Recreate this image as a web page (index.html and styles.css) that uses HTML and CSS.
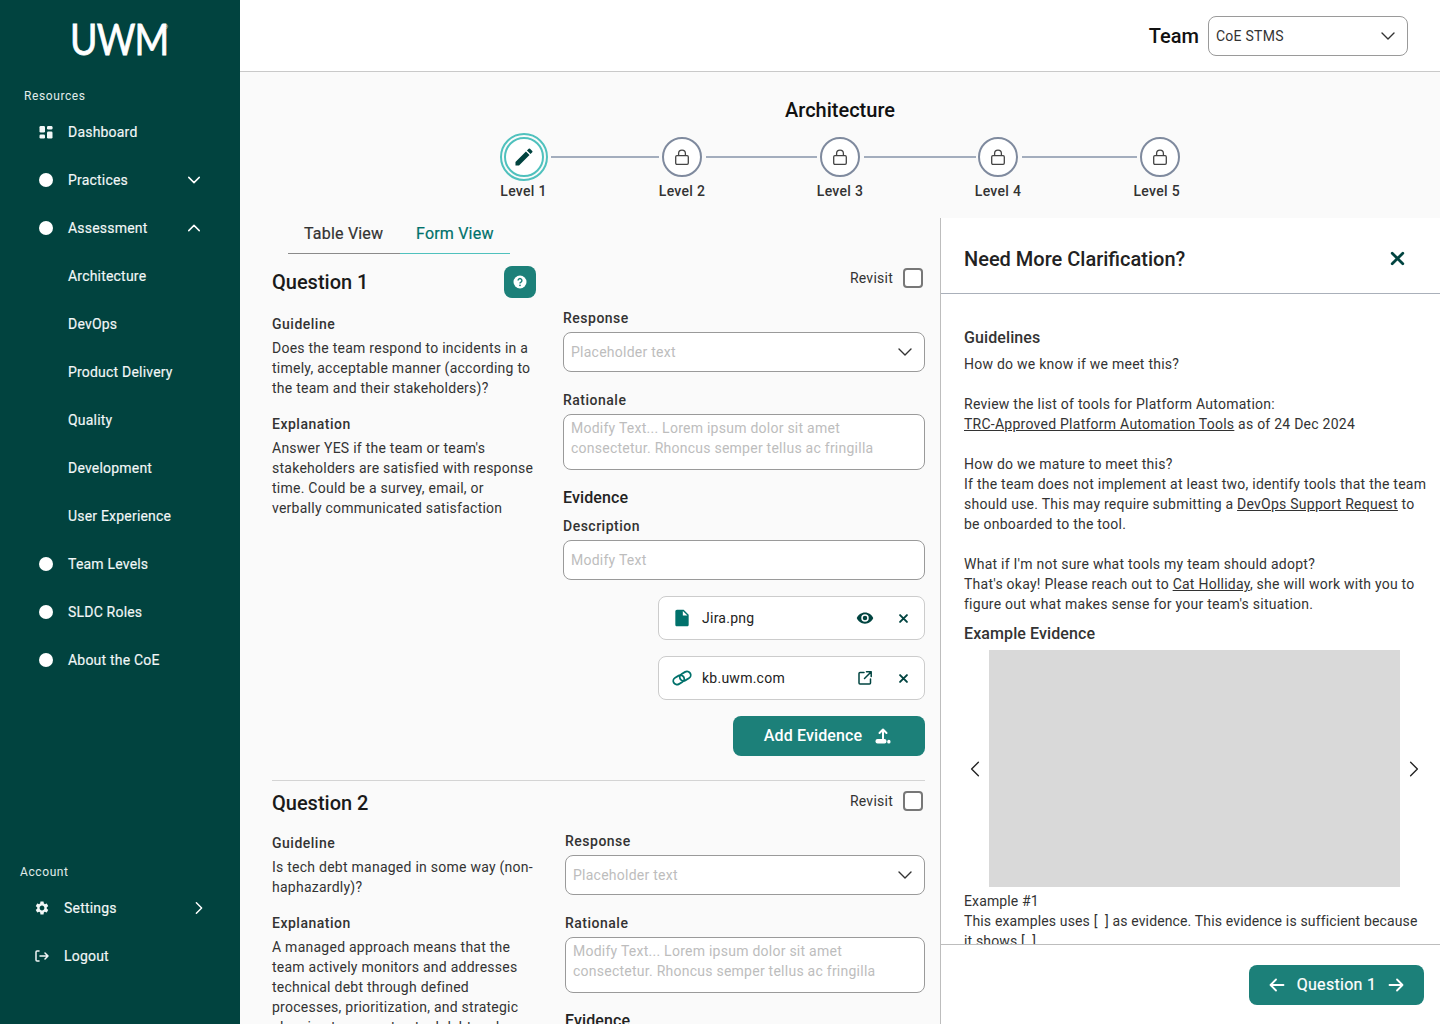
FILE: index.html
```html
<!DOCTYPE html>
<html lang="en">
<head>
<meta charset="utf-8">
<title>UWM Assessment</title>
<link rel="stylesheet" href="styles.css">
</head>
<body>
<svg class="defs" width="0" height="0" aria-hidden="true">
  <symbol id="i-down" viewBox="0 0 16 16"><path d="M2 5l6 6 6-6" fill="none" stroke="currentColor" stroke-linecap="round" stroke-linejoin="round"/></symbol>
  <symbol id="i-up" viewBox="0 0 16 16"><path d="M2 11l6-6 6 6" fill="none" stroke="currentColor" stroke-linecap="round" stroke-linejoin="round"/></symbol>
  <symbol id="i-right" viewBox="0 0 16 16"><path d="M5 2l6 6-6 6" fill="none" stroke="currentColor" stroke-linecap="round" stroke-linejoin="round"/></symbol>
  <symbol id="i-left" viewBox="0 0 16 16"><path d="M11 2L5 8l6 6" fill="none" stroke="currentColor" stroke-linecap="round" stroke-linejoin="round"/></symbol>
  <symbol id="i-lock" viewBox="0 0 16 16"><rect x="1.7" y="6.7" width="12.6" height="8.6" rx="1.2" fill="none" stroke="currentColor" stroke-width="1.3"/><path d="M4.6 6.7V4.6a3.4 3.4 0 0 1 6.8 0v2.1" fill="none" stroke="currentColor" stroke-width="1.3"/></symbol>
  <symbol id="i-x" viewBox="0 0 16 16"><path d="M3 3l10 10M13 3L3 13" fill="none" stroke="currentColor" stroke-linecap="round"/></symbol>
</svg>

<aside class="sidebar">
  <div class="logo"><span class="logo-text">UWM<span class="logo-mark">®</span></span></div>
  <div class="nav-label">Resources</div>
  <nav class="nav">
    <a class="nav-item"><span class="nav-icon"><svg width="14" height="13" viewBox="0 0 14 13"><rect x="0.5" y="0" width="5.5" height="6.5" rx="1.2" fill="currentColor"/><rect x="0.5" y="8.5" width="5.5" height="4" rx="1.2" fill="currentColor"/><rect x="8" y="0" width="5.5" height="3.5" rx="1.2" fill="currentColor"/><rect x="8" y="5.5" width="5.5" height="7" rx="1.2" fill="currentColor"/></svg></span><span class="nav-text">Dashboard</span></a>
    <a class="nav-item"><span class="nav-icon"><span class="dot"></span></span><span class="nav-text">Practices</span><svg class="nav-chev"><use href="#i-down"/></svg></a>
    <a class="nav-item"><span class="nav-icon"><span class="dot"></span></span><span class="nav-text">Assessment</span><svg class="nav-chev"><use href="#i-up"/></svg></a>
    <a class="nav-item"><span class="nav-icon"></span><span class="nav-text">Architecture</span></a>
    <a class="nav-item"><span class="nav-icon"></span><span class="nav-text">DevOps</span></a>
    <a class="nav-item"><span class="nav-icon"></span><span class="nav-text">Product Delivery</span></a>
    <a class="nav-item"><span class="nav-icon"></span><span class="nav-text">Quality</span></a>
    <a class="nav-item"><span class="nav-icon"></span><span class="nav-text">Development</span></a>
    <a class="nav-item"><span class="nav-icon"></span><span class="nav-text">User Experience</span></a>
    <a class="nav-item"><span class="nav-icon"><span class="dot"></span></span><span class="nav-text">Team Levels</span></a>
    <a class="nav-item"><span class="nav-icon"><span class="dot"></span></span><span class="nav-text">SLDC Roles</span></a>
    <a class="nav-item"><span class="nav-icon"><span class="dot"></span></span><span class="nav-text">About the CoE</span></a>
  </nav>
  <div class="account">
    <div class="nav-label account-label">Account</div>
    <a class="nav-item"><span class="nav-icon"><svg width="16" height="16" viewBox="0 0 24 24"><path fill="currentColor" d="M19.14 12.94c.04-.3.06-.61.06-.94 0-.32-.02-.64-.07-.94l2.03-1.58a.49.49 0 0 0 .12-.61l-1.92-3.32a.488.488 0 0 0-.59-.22l-2.39.96c-.5-.38-1.03-.7-1.62-.94l-.36-2.54a.484.484 0 0 0-.48-.41h-3.84c-.24 0-.43.17-.47.41l-.36 2.54c-.59.24-1.13.57-1.62.94l-2.39-.96c-.22-.08-.47 0-.59.22L2.74 8.87c-.12.21-.08.47.12.61l2.03 1.58c-.05.3-.09.63-.09.94s.02.64.07.94l-2.03 1.58a.49.49 0 0 0-.12.61l1.92 3.32c.12.22.37.29.59.22l2.39-.96c.5.38 1.03.7 1.62.94l.36 2.54c.05.24.24.41.48.41h3.84c.24 0 .44-.17.47-.41l.36-2.54c.59-.24 1.13-.56 1.62-.94l2.39.96c.22.08.47 0 .59-.22l1.92-3.32c.12-.22.07-.47-.12-.61l-2.01-1.58zM12 15.6c-1.98 0-3.6-1.62-3.6-3.6s1.62-3.6 3.6-3.6 3.6 1.62 3.6 3.6-1.62 3.6-3.6 3.6z"/></svg></span><span class="nav-text">Settings</span><svg class="nav-chev"><use href="#i-right"/></svg></a>
    <a class="nav-item"><span class="nav-icon"><svg width="14" height="12" viewBox="0 0 14 12"><path d="M4 1H2a1 1 0 0 0-1 1v8a1 1 0 0 0 1 1h2M5 6h8M10 3l3 3-3 3" fill="none" stroke="currentColor" stroke-width="1.5" stroke-linecap="round" stroke-linejoin="round"/></svg></span><span class="nav-text">Logout</span></a>
  </div>
</aside>

<div class="page">
  <header class="topbar">
    <span class="team-label">Team</span>
    <div class="select team-select"><span class="select-value">CoE STMS</span><svg class="select-chev"><use href="#i-down"/></svg></div>
  </header>

  <section class="hero">
    <h1 class="hero-title">Architecture</h1>
    <div class="stepper">
      <div class="step step-active">
        <span class="ring"><span class="circle circle-active"><svg width="18" height="18" viewBox="2.5 2.5 19 19"><path fill="currentColor" d="M3 17.25V21h3.75L17.81 9.94l-3.75-3.75L3 17.25zM20.71 7.04a1 1 0 0 0 0-1.41l-2.34-2.34a1 1 0 0 0-1.41 0l-1.83 1.83 3.75 3.75 1.83-1.83z"/></svg></span></span>
        <span class="step-label">Level 1</span>
      </div>
      <span class="line line-1"></span>
      <div class="step"><span class="circle"><svg class="lock"><use href="#i-lock"/></svg></span><span class="step-label">Level 2</span></div>
      <span class="line line-2"></span>
      <div class="step"><span class="circle"><svg class="lock"><use href="#i-lock"/></svg></span><span class="step-label">Level 3</span></div>
      <span class="line line-3"></span>
      <div class="step"><span class="circle"><svg class="lock"><use href="#i-lock"/></svg></span><span class="step-label">Level 4</span></div>
      <span class="line line-4"></span>
      <div class="step step-last"><span class="circle"><svg class="lock"><use href="#i-lock"/></svg></span><span class="step-label">Level 5</span></div>
    </div>
  </section>

  <div class="split">
    <main class="form-pane">
      <div class="tabs">
        <span class="tab">Table View</span>
        <span class="tab tab-active">Form View</span>
      </div>

      <section class="question q1">
        <div class="q-head">
          <div class="q-head-left">
            <h2 class="q-title">Question 1</h2>
            <button class="help-btn" type="button"><svg width="14" height="14" viewBox="0 0 14 14"><circle cx="7" cy="7" r="6.5" fill="#fff"/><path d="M5.1 5.5a1.9 1.9 0 1 1 2.9 1.6c-.7.4-1 .7-1 1.3" fill="none" stroke="#1c8079" stroke-width="1.4"/><circle cx="7" cy="10.3" r=".9" fill="#1c8079"/></svg></button>
          </div>
          <label class="revisit"><span>Revisit</span><span class="check"></span></label>
        </div>
        <div class="q-body">
          <div class="q-info">
            <h3 class="label">Guideline</h3>
            <p class="copy">Does the team respond to incidents in a timely, acceptable manner (according to the team and their stakeholders)?</p>
            <h3 class="label label-gap">Explanation</h3>
            <p class="copy">Answer YES if the team or team's stakeholders are satisfied with response time. Could be a survey, email, or verbally communicated satisfaction</p>
          </div>
          <div class="q-fields">
            <div class="label">Response</div>
            <div class="select field"><span class="placeholder">Placeholder text</span><svg class="select-chev"><use href="#i-down"/></svg></div>
            <div class="label field-gap">Rationale</div>
            <div class="textarea field placeholder">Modify Text... Lorem ipsum dolor sit amet consectetur. Rhoncus semper tellus ac fringilla</div>
            <h3 class="evidence-title">Evidence</h3>
            <div class="label desc-label">Description</div>
            <div class="select field"><span class="placeholder">Modify Text</span></div>
            <div class="chips">
              <div class="chip">
                <svg class="chip-lead" width="20" height="20" viewBox="0 0 24 24"><path fill="#00716b" d="M6 2c-1.1 0-2 .9-2 2v16c0 1.1.9 2 2 2h12c1.1 0 2-.9 2-2V8l-6-6H6zm7 7V3.5L18.5 9H13z"/></svg>
                <span class="chip-name">Jira.png</span>
                <svg class="chip-act" width="18" height="18" viewBox="0 0 24 24"><path fill="#014440" d="M12 4.5C7 4.5 2.73 7.61 1 12c1.73 4.39 6 7.5 11 7.5s9.27-3.11 11-7.5c-1.73-4.39-6-7.5-11-7.5zM12 17a5 5 0 1 1 0-10 5 5 0 0 1 0 10zm0-8a3 3 0 1 0 0 6 3 3 0 0 0 0-6z"/></svg>
                <svg class="chip-x"><use href="#i-x"/></svg>
              </div>
              <div class="chip">
                <svg class="chip-lead" width="20" height="20" viewBox="0 0 20 20"><g transform="rotate(-30 10 10)" fill="none" stroke="#00716b" stroke-width="1.8"><rect x="0.500" y="6.300" width="11.500" height="7.400" rx="3.700"/><rect x="8" y="6.300" width="11.500" height="7.400" rx="3.700"/></g></svg>
                <span class="chip-name">kb.uwm.com</span>
                <svg class="chip-act" width="18" height="18" viewBox="-1 -1 18 18"><g fill="none" stroke="#014440" stroke-width="1.5" stroke-linecap="round" stroke-linejoin="round"><path d="M7 2.500H3a1 1 0 0 0-1 1V13a1 1 0 0 0 1 1h9.500a1 1 0 0 0 1-1V9"/><path d="M9.500 1.800h4.700v4.700M14 2l-6.500 6.500"/></g></svg>
                <svg class="chip-x"><use href="#i-x"/></svg>
              </div>
            </div>
            <button class="btn add-btn" type="button"><span>Add Evidence</span>
              <svg width="18" height="18" viewBox="0 0 18 18"><path d="M9 11.500V2.500M5.500 6L9 2.500 12.500 6" fill="none" stroke="#fff" stroke-width="2" stroke-linecap="round" stroke-linejoin="round"/><rect x="1.500" y="12" width="11" height="4.500" rx="2" fill="#fff"/><rect x="13.200" y="12.800" width="3.300" height="3.700" rx="1.600" fill="#fff"/></svg>
            </button>
          </div>
        </div>
      </section>

      <section class="question q2">
        <div class="q-head q2-head">
          <h2 class="q-title">Question 2</h2>
          <label class="revisit"><span>Revisit</span><span class="check"></span></label>
        </div>
        <div class="q-body q2-body">
          <div class="q-info">
            <h3 class="label">Guideline</h3>
            <p class="copy">Is tech debt managed in some way (non-haphazardly)?</p>
            <h3 class="label label-gap">Explanation</h3>
            <p class="copy">A managed approach means that the team actively monitors and addresses technical debt through defined processes, prioritization, and strategic planning to prevent actual debt and</p>
          </div>
          <div class="q-fields">
            <div class="label">Response</div>
            <div class="select field"><span class="placeholder">Placeholder text</span><svg class="select-chev"><use href="#i-down"/></svg></div>
            <div class="label field-gap">Rationale</div>
            <div class="textarea field placeholder">Modify Text... Lorem ipsum dolor sit amet consectetur. Rhoncus semper tellus ac fringilla</div>
            <h3 class="evidence-title">Evidence</h3>
          </div>
        </div>
      </section>
    </main>

    <aside class="panel">
      <div class="panel-head">
        <h2 class="panel-title">Need More Clarification?</h2>
        <svg class="panel-x"><use href="#i-x"/></svg>
      </div>
      <div class="panel-body">
        <h3 class="panel-sub">Guidelines</h3>
        <p class="panel-copy">How do we know if we meet this?</p>
        <p class="panel-copy">Review the list of tools for Platform Automation:<br><a class="link">TRC-Approved Platform Automation Tools</a> as of 24 Dec 2024</p>
        <p class="panel-copy">How do we mature to meet this?<br>If the team does not implement at least two, identify tools that the team should use. This may require submitting a <a class="link">DevOps Support Request</a> to be onboarded to the tool.</p>
        <p class="panel-copy">What if I'm not sure what tools my team should adopt?<br>That's okay! Please reach out to <a class="link">Cat Holliday</a>, she will work with you to figure out what makes sense for your team's situation.</p>
        <h3 class="panel-sub example-title">Example Evidence</h3>
        <div class="carousel">
          <svg class="car-arrow"><use href="#i-left"/></svg>
          <div class="car-image"></div>
          <svg class="car-arrow"><use href="#i-right"/></svg>
        </div>
        <p class="panel-copy example-copy">Example #1<br>This examples uses [ &nbsp;] as evidence. This evidence is sufficient because it shows [ &nbsp;]</p>
      </div>
      <div class="panel-foot">
        <button class="btn next-btn" type="button">
          <svg width="18" height="18" viewBox="0 0 18 18"><path d="M15.500 9h-13M8 3.500L2.500 9 8 14.500" fill="none" stroke="#fff" stroke-width="1.800" stroke-linecap="round" stroke-linejoin="round"/></svg>
          <span>Question 1</span>
          <svg width="18" height="18" viewBox="0 0 18 18"><path d="M2.500 9h13M10 3.500L15.500 9 10 14.500" fill="none" stroke="#fff" stroke-width="1.800" stroke-linecap="round" stroke-linejoin="round"/></svg>
        </button>
      </div>
    </aside>
  </div>
</div>
</body>
</html>
```
FILE: styles.css
```css
* { box-sizing: border-box; }
html, body { margin: 0; padding: 0; }
body {
  display: flex;
  width: 1440px;
  height: 1024px;
  overflow: hidden;
  font-family: Roboto, "Liberation Sans", sans-serif;
  font-size: 14px;
  line-height: 20px;
  letter-spacing: 0.25px;
  color: #333;
  background: #fafafa;
}
h1, h2, h3, p { margin: 0; font: inherit; }
button { font: inherit; letter-spacing: inherit; border: 0; cursor: pointer; }
.defs { position: absolute; }

/* Sidebar */
.sidebar {
  width: 240px;
  flex: none;
  display: flex;
  flex-direction: column;
  background: #01433f;
  color: #fff;
  padding-bottom: 44px;
}
.logo {
  height: 86px;
  padding-top: 14px;
  display: flex;
  justify-content: center;
  color: #fff;
}
.logo-text {
  position: relative;
  left: -1px;
  font-family: Lato, sans-serif;
  font-size: 42px;
  line-height: 50px;
  letter-spacing: -1px;
  -webkit-text-stroke: .8px #fff;
  transform: scaleX(.89);
  transform-origin: center;
}
.logo-mark {
  position: absolute;
  left: 100%;
  top: 9px;
  margin-left: -5px;
  font-family: Roboto, sans-serif;
  font-size: 6px;
  line-height: 8px;
  letter-spacing: 0;
  -webkit-text-stroke: 0;
}
.nav-label {
  font-size: 12px;
  line-height: 20px;
  letter-spacing: .6px;
  padding-left: 24px;
  color: #e0eceb;
}
.nav { display: flex; flex-direction: column; margin-top: 2px; }
.nav-item {
  height: 48px;
  display: flex;
  align-items: center;
  padding-left: 38px;
  color: #f2f7f7;
  letter-spacing: .2px;
}
.nav-icon { width: 16px; height: 16px; flex: none; display: flex; align-items: center; justify-content: center; margin-right: 14px; }
.dot { width: 14px; height: 14px; border-radius: 50%; background: #fff; }
.nav-text { flex: 1; font-weight: 400; -webkit-text-stroke: .15px currentColor; }
.nav-chev { width: 14px; height: 14px; margin-right: 39px; color: #fff; stroke-width: 1.7; }
.account { margin-top: auto; }
.account-label { padding-left: 20px; margin-bottom: 2px; }
.account .nav-item { padding-left: 34px; }
.account .nav-chev { margin-right: 34px; }

/* Page */
.page { flex: 1; min-width: 0; display: flex; flex-direction: column; }
.topbar {
  height: 72px;
  flex: none;
  display: flex;
  align-items: center;
  justify-content: flex-end;
  padding-right: 32px;
  background: #fff;
  border-bottom: 1px solid #c9c9c9;
}
.team-label { font-size: 20px; font-weight: 500; color: #111; margin-right: 9px; letter-spacing: 0; }
.select {
  display: flex;
  align-items: center;
  height: 40px;
  border: 1px solid #9a9a9a;
  border-radius: 8px;
  background: #fff;
  padding: 0 11px 0 7px;
}
.team-select { width: 200px; }
.select-value { flex: 1; }
.select-chev { width: 16px; height: 16px; color: #333; margin-left: auto; stroke-width: 1.4; }

.hero { height: 146px; flex: none; text-align: center; padding-top: 26px; }
.hero-title { font-size: 20px; line-height: 24px; font-weight: 500; color: #111; letter-spacing: 0; }
.stepper { display: flex; justify-content: center; align-items: flex-start; margin-top: 11px; padding-right: 2px; }
.step { display: flex; flex-direction: column; align-items: center; width: 45px; padding-top: 4px; }
.step-active { width: 48px; padding-top: 0; }
.step-last { align-items: flex-end; }
.step-last .circle { margin-right: -1px; }
.step-last .step-label { align-self: flex-start; }
.circle {
  width: 40px;
  height: 40px;
  flex: none;
  border-radius: 50%;
  border: 2px solid #7f8a9e;
  background: #fff;
  display: flex;
  align-items: center;
  justify-content: center;
  color: #444;
}
.circle-active { border-color: #4fc1bd; color: #01433f; }
.ring { width: 48px; height: 48px; flex: none; border-radius: 50%; border: 2px solid #4fc1bd; display: flex; align-items: center; justify-content: center; }
.lock { width: 16px; height: 16px; }
.step-label { margin-top: 4px; white-space: nowrap; font-weight: 500; color: #333; line-height: 20px; letter-spacing: .3px; }
.step-active .step-label { margin-top: 0; }
.line { height: 2px; background: #a3adbd; margin-top: 23px; flex: none; }
.line-1 { width: 108px; margin-left: 3px; margin-right: 1px; }
.line-2 { width: 111px; margin-left: 1px; margin-right: 1px; }
.line-3 { width: 112px; margin-left: 1px; margin-right: 0; }
.line-4 { width: 115px; margin-left: 1px; margin-right: -3px; }

.split { flex: 1; min-height: 0; display: flex; }
.form-pane { width: 700px; flex: none; overflow: hidden; padding: 0 15px 0 32px; }
.tabs { display: flex; margin-left: 16px; width: 222px; height: 36px; }
.tab { width: 112px; height: 36px; padding: 6px 0 0 16px; font-size: 16px; line-height: 20px; font-weight: 400; color: #333; border-bottom: 1px solid #8a8a8a; letter-spacing: .2px; white-space: nowrap; -webkit-text-stroke: .2px currentColor; }
.tab-active { width: 110px; color: #00716b; border-bottom-color: #4fc1bd; }
.q1 { padding-top: 12px; height: 527px; border-bottom: 1px solid #d4d4d4; }
.q-head { display: flex; align-items: center; justify-content: space-between; height: 32px; padding-right: 2px; }
.q-head-left { width: 264px; display: flex; align-items: center; justify-content: space-between; }
.q-title { font-size: 20px; line-height: 32px; font-weight: 500; color: #1a1a1a; letter-spacing: 0; }
.help-btn { width: 32px; height: 32px; border-radius: 8px; background: #1c8079; display: flex; align-items: center; justify-content: center; padding: 0; }
.revisit { display: flex; align-items: center; gap: 10px; color: #333; margin-bottom: 8px; }
.check { width: 20px; height: 20px; border: 2px solid #777; border-radius: 4px; background: #fff; }
.q-body { display: flex; justify-content: space-between; }
.q1 .q-body { margin-top: 10px; }
.q-info { width: 264px; padding-top: 6px; }
.q-fields { width: 362px; }
.label { font-weight: 500; line-height: 20px; color: #333; letter-spacing: .5px; }
.label-gap { margin-top: 16px; }
.copy { margin-top: 4px; }
.field { width: 100%; margin-top: 4px; }
.field-gap { margin-top: 18px; }
.placeholder { color: #bdbdbd; }
.textarea { height: 56px; border: 1px solid #9a9a9a; border-radius: 8px; background: #fff; padding: 3px 7px; }
.evidence-title { font-size: 16px; line-height: 20px; font-weight: 500; margin-top: 18px; color: #222; letter-spacing: .1px; }
.desc-label { margin-top: 8px; }
.chips { display: flex; flex-direction: column; gap: 16px; align-items: flex-end; margin-top: 16px; }
.chip { width: 267px; height: 44px; background: #fff; border: 1px solid #ccc; border-radius: 8px; display: flex; align-items: center; padding: 0 15px 0 13px; }
.chip-lead { flex: none; margin-right: 10px; }
.chip-name { flex: 1; color: #222; }
.chip-act { flex: none; margin-right: 24px; }
.chip-x { width: 11px; height: 11px; flex: none; color: #014440; stroke-width: 2.8; }
.btn { display: flex; align-items: center; justify-content: center; background: #1c8079; color: #fff; border-radius: 8px; height: 40px; font-size: 16px; font-weight: 500; }
.add-btn { width: 192px; gap: 12px; margin: 16px 0 0 auto; padding: 0 8px 0 6px; letter-spacing: .12px; }
.q2-head { height: 44px; padding-right: 2px; }
.q2-head .revisit { margin-bottom: 4px; }
.q2-body { margin-top: 6px; }
.q2 .q-fields { width: 360px; }
.q2 .q-info { padding-top: 2px; }

/* Panel */
.panel { flex: 1; min-width: 0; background: #fff; border-left: 1px solid #bdbdbd; display: flex; flex-direction: column; }
.panel-head { height: 76px; flex: none; display: flex; align-items: center; justify-content: space-between; padding: 14px 34px 8px 23px; border-bottom: 1px solid #aab0ba; }
.panel-title { font-size: 20px; font-weight: 500; line-height: 28px; color: #222; letter-spacing: 0; }
.panel-x { width: 17px; height: 17px; color: #014440; stroke-width: 2.6; }
.panel-body { flex: 1; min-height: 0; overflow: hidden; padding: 34px 12px 0 23px; }
.panel-sub { font-size: 16px; line-height: 20px; font-weight: 500; color: #333; letter-spacing: .1px; }
.panel-copy { margin-top: 20px; }
.panel-sub + .panel-copy { margin-top: 6px; }
.link { text-decoration: underline; }
.example-title { margin-top: 10px; }
.carousel { display: flex; align-items: center; margin-top: 6px; }
.car-arrow { width: 18px; height: 18px; color: #222; flex: none; margin-left: 2px; margin-right: 5px; stroke-width: 1.2; }
.car-image + .car-arrow { margin-left: 5px; margin-right: 0; }
.car-image { width: 411px; height: 237px; background: #d9d9d9; flex: none; }
.panel-copy.example-copy { margin-top: 4px; letter-spacing: .13px; word-spacing: .1px; }
.panel-foot { height: 80px; flex: none; border-top: 1px solid #bdbdbd; display: flex; justify-content: flex-end; align-items: center; padding-right: 16px; }
.next-btn { width: 175px; gap: 11px; font-weight: 400; letter-spacing: .3px; -webkit-text-stroke: .2px currentColor; }
```
